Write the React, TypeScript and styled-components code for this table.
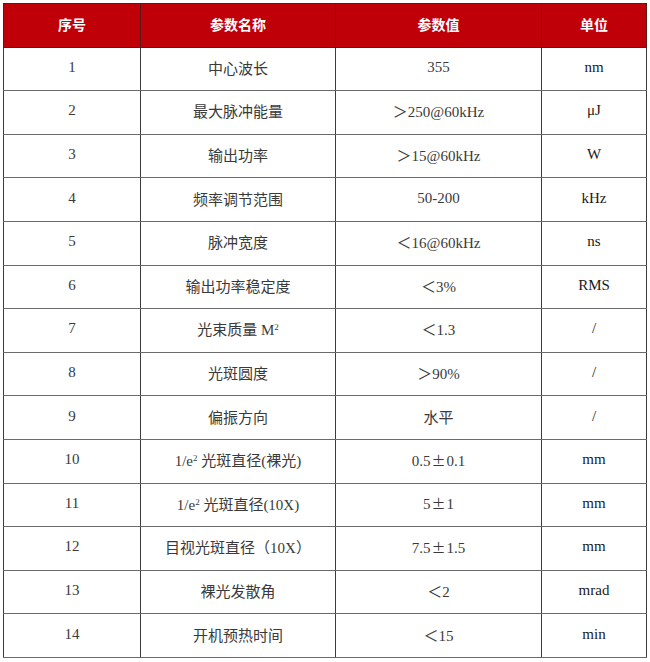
import React from 'react';
import styled, { createGlobalStyle } from 'styled-components';

const Global = createGlobalStyle`
  html, body {
    margin: 0;
    padding: 0;
    background: #ffffff;
  }
  body {
    font-family: "Liberation Serif", "Noto Sans CJK SC", serif;
    color: #333;
  }
`;

const Page = styled.div`
  padding: 3px 4px 0 3px;
`;

const Table = styled.table`
  width: 643px;
  border-collapse: collapse;
  table-layout: fixed;
`;

const Row = styled.tr`
  height: 43.6px;
`;

const HeadCell = styled.th`
  background: #c00008;
  color: #ffffff;
  font-family: "Noto Sans CJK SC", sans-serif;
  font-weight: 700;
  font-size: 14px;
  text-align: center;
  vertical-align: middle;
  border: 1px solid #5a1a1a;
  padding: 0 0 2px;
`;

const Cell = styled.td<{ $unit?: boolean }>`
  border: 1px solid #3c3c3c;
  border-top-color: #6a6a6a;
  border-bottom-color: #6a6a6a;
  text-align: center;
  vertical-align: middle;
  padding: 0 0 3px;
  font-size: 15px;
  font-weight: 400;
  color: ${(p) => (p.$unit ? '#1a1a1a' : '#3a3a3a')};
  white-space: nowrap;
`;

const Sup = styled.sup`
  font-size: 9px;
  vertical-align: 5px;
  line-height: 0;
`;

const Sym = styled.span`
  font-family: "Noto Sans CJK SC", sans-serif;
  font-size: 14px;
  padding: 0 1px;
`;

const widths = [137, 195, 206, 105];

type RowData = [string, React.ReactNode, React.ReactNode, string];

const pm = <Sym>±</Sym>;

const rows: RowData[] = [
  ['1', '中心波长', '355', 'nm'],
  ['2', '最大脉冲能量', '＞250@60kHz', 'μJ'],
  ['3', '输出功率', '＞15@60kHz', 'W'],
  ['4', '频率调节范围', '50-200', 'kHz'],
  ['5', '脉冲宽度', '＜16@60kHz', 'ns'],
  ['6', '输出功率稳定度', '＜3%', 'RMS'],
  ['7', <>光束质量 M<Sup>2</Sup></>, '＜1.3', '/'],
  ['8', '光斑圆度', '＞90%', '/'],
  ['9', '偏振方向', '水平', '/'],
  ['10', <>1/e<Sup>2</Sup> 光斑直径(裸光)</>, <>0.5{pm}0.1</>, 'mm'],
  ['11', <>1/e<Sup>2</Sup> 光斑直径(10X)</>, <>5{pm}1</>, 'mm'],
  ['12', '目视光斑直径（10X）', <>7.5{pm}1.5</>, 'mm'],
  ['13', '裸光发散角', '＜2', 'mrad'],
  ['14', '开机预热时间', '＜15', 'min'],
];

const App = () => {
  return (
    <>
      <Global />
      <Page>
        <Table>
          <colgroup>
            {widths.map((w, i) => (
              <col key={i} style={{ width: w }} />
            ))}
          </colgroup>
          <thead>
            <Row>
              <HeadCell>序号</HeadCell>
              <HeadCell>参数名称</HeadCell>
              <HeadCell>参数值</HeadCell>
              <HeadCell>单位</HeadCell>
            </Row>
          </thead>
          <tbody>
            {rows.map(([no, name, value, unit]) => (
              <Row key={no}>
                <Cell>{no}</Cell>
                <Cell>{name}</Cell>
                <Cell>{value}</Cell>
                <Cell $unit>{unit}</Cell>
              </Row>
            ))}
          </tbody>
        </Table>
      </Page>
    </>
  );
};

export default App;
